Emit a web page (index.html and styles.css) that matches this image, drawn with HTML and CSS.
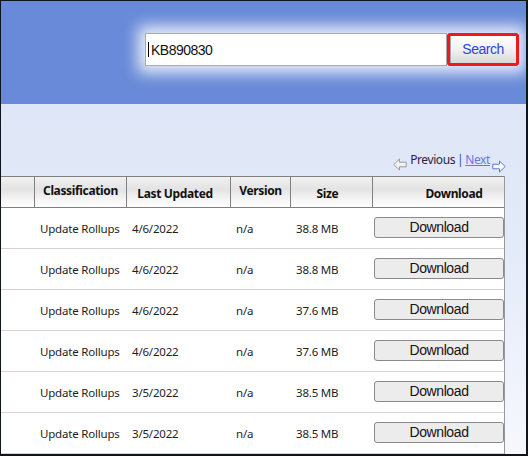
FILE: index.html
```html
<!DOCTYPE html>
<html lang="en">
<head>
<meta charset="utf-8">
<title>Microsoft Update Catalog</title>
<link rel="stylesheet" href="styles.css">
</head>
<body>
<div class="frame">
  <header class="top">
    <div class="search">
      <div class="search-input"><span class="caret"></span><span class="query">KB890830</span></div>
      <button class="search-btn" type="button">Search</button>
    </div>
  </header>
  <main class="content">
    <nav class="pager">
      <svg class="arrow arrow-prev" width="14" height="13" viewBox="0 0 14 13" aria-hidden="true">
        <path d="M0.8 6.5 L6.5 1 L6.5 4.2 L13.2 4.2 L13.2 8.8 L6.5 8.8 L6.5 12 Z" fill="#f2f2f2" stroke="#9a9a9a" stroke-width="1"/>
      </svg>
      <span class="prev">Previous</span>
      <span class="sep">|</span>
      <a class="next" href="#">Next</a>
      <svg class="arrow arrow-next" width="14" height="13" viewBox="0 0 14 13" aria-hidden="true">
        <path d="M13.2 6.5 L7.5 1 L7.5 4.2 L0.8 4.2 L0.8 8.8 L7.5 8.8 L7.5 12 Z" fill="#ffffff" stroke="#5a76d6" stroke-width="1"/>
      </svg>
    </nav>
    <div class="table">
      <div class="row head">
        <div class="cell"></div>
        <div class="cell">Classification</div>
        <div class="cell sort sort-date">Last Updated</div>
        <div class="cell">Version</div>
        <div class="cell sort sort-size">Size</div>
        <div class="cell sort sort-dl">Download</div>
      </div>
      <div class="row">
        <div class="cell"></div>
        <div class="cell">Update Rollups</div>
        <div class="cell">4/6/2022</div>
        <div class="cell">n/a</div>
        <div class="cell">38.8 MB</div>
        <div class="cell dl"><button class="dl-btn" type="button">Download</button></div>
      </div>
      <div class="row">
        <div class="cell"></div>
        <div class="cell">Update Rollups</div>
        <div class="cell">4/6/2022</div>
        <div class="cell">n/a</div>
        <div class="cell">38.8 MB</div>
        <div class="cell dl"><button class="dl-btn" type="button">Download</button></div>
      </div>
      <div class="row">
        <div class="cell"></div>
        <div class="cell">Update Rollups</div>
        <div class="cell">4/6/2022</div>
        <div class="cell">n/a</div>
        <div class="cell">37.6 MB</div>
        <div class="cell dl"><button class="dl-btn" type="button">Download</button></div>
      </div>
      <div class="row">
        <div class="cell"></div>
        <div class="cell">Update Rollups</div>
        <div class="cell">4/6/2022</div>
        <div class="cell">n/a</div>
        <div class="cell">37.6 MB</div>
        <div class="cell dl"><button class="dl-btn" type="button">Download</button></div>
      </div>
      <div class="row">
        <div class="cell"></div>
        <div class="cell">Update Rollups</div>
        <div class="cell">3/5/2022</div>
        <div class="cell">n/a</div>
        <div class="cell">38.5 MB</div>
        <div class="cell dl"><button class="dl-btn" type="button">Download</button></div>
      </div>
      <div class="row">
        <div class="cell"></div>
        <div class="cell">Update Rollups</div>
        <div class="cell">3/5/2022</div>
        <div class="cell">n/a</div>
        <div class="cell">38.5 MB</div>
        <div class="cell dl"><button class="dl-btn" type="button">Download</button></div>
      </div>
    </div>
  </main>
</div>
</body>
</html>
```

FILE: styles.css
```css
* { box-sizing: border-box; }

html, body {
  margin: 0;
  padding: 0;
  background: #ffffff;
}

body {
  font-family: "Noto Sans", "Open Sans", sans-serif;
  font-size: 12px;
  color: #1e1e1e;
}

.frame {
  width: 528px;
  height: 456px;
  overflow: hidden;
  border-style: solid;
  border-color: #10151b;
  border-width: 1px 2px 2px 1px;
  display: flex;
  flex-direction: column;
}

.top {
  height: 103px;
  flex: 0 0 auto;
  background: #688ad8;
  display: flex;
  justify-content: flex-end;
  align-items: flex-start;
  padding: 32px 7px 0 0;
}

.search {
  display: flex;
  box-shadow: 0 0 14px 7px rgba(255, 255, 255, 0.85);
  background: #ffffff;
}

.search-input {
  width: 302px;
  height: 33px;
  border: 1px solid #a9a9a9;
  background: #ffffff;
  display: flex;
  align-items: center;
  padding-left: 2px;
  font-family: "Liberation Sans", Arial, sans-serif;
  font-size: 14px;
  letter-spacing: -0.5px;
  color: #111111;
}

.caret {
  width: 1px;
  height: 15px;
  background: #000000;
  margin-right: 2px;
}

.search-btn {
  width: 72px;
  height: 33px;
  margin: 0;
  padding: 0 0 1px 0;
  border: 3px solid #f01818;
  border-radius: 3px;
  background: linear-gradient(#ffffff 0%, #f1f1f1 50%, #d9d9d9 100%);
  box-shadow: inset 1px 0 0 #a8a8a8;
  font-family: "Liberation Sans", Arial, sans-serif;
  font-size: 14px;
  letter-spacing: -0.5px;
  color: #2b45e0;
}

.content {
  flex: 1 1 auto;
  background: linear-gradient(#dee6f7 0%, #e3eaf9 40%, #f6f8fd 100%);
  display: flex;
  flex-direction: column;
  padding-top: 48px;
}

.pager {
  display: flex;
  justify-content: flex-end;
  align-items: flex-start;
  height: 24px;
  padding-right: 20px;
  font-size: 12px;
  line-height: 16px;
  letter-spacing: -0.4px;
}

.arrow {
  display: block;
}

.arrow-prev { margin-top: 6px; }
.arrow-next { margin-top: 8px; }

.prev {
  color: #2b1c44;
  margin-left: 3px;
}

.sep {
  color: #33508f;
  margin: 0 2px 0 2px;
}

.next {
  color: #6878d8;
  text-decoration: underline;
  margin-right: 2px;
}

.table {
  width: 504px;
  background: #ffffff;
  border-right: 1px solid #999999;
  font-size: 11.5px;
}

.row {
  display: grid;
  grid-template-columns: 34px 92px 104px 60px 82px 131px;
  height: 41px;
  border-bottom: 1px solid #d3d3d3;
}

.cell {
  display: flex;
  align-items: center;
  padding: 0 4px 0 5px;
  white-space: nowrap;
  overflow: hidden;
  letter-spacing: -0.2px;
}

.head {
  height: 32px;
  border-top: 1px solid #808080;
  border-bottom: 1px solid #808080;
  background: linear-gradient(#f1f1f1 0%, #e3e3e3 40%, #f6f6f6 78%, #ffffff 100%);
}

.head .cell {
  justify-content: center;
  padding: 0 0 3px 0;
  border-right: 1px solid #808080;
  font-weight: 700;
  font-size: 12px;
  color: #111111;
  letter-spacing: -0.35px;
}

.head .cell:last-child {
  border-right: none;
}

.head .sort {
  padding-top: 2px;
  padding-bottom: 0;
}

.head .sort-date { padding-right: 7px; }
.head .sort-size { padding-right: 8px; }
.head .sort-dl { padding-left: 31px; }

.cell.dl {
  padding: 0 0 2px 1px;
}

.dl-btn {
  width: 131px;
  height: 21px;
  margin: 0;
  padding: 0 0 1px 0;
  border: 1px solid #8a8a8a;
  border-radius: 3px;
  background: #ececec;
  font-family: "Liberation Sans", Arial, sans-serif;
  font-size: 14px;
  letter-spacing: -0.4px;
  color: #1c1010;
}
```
